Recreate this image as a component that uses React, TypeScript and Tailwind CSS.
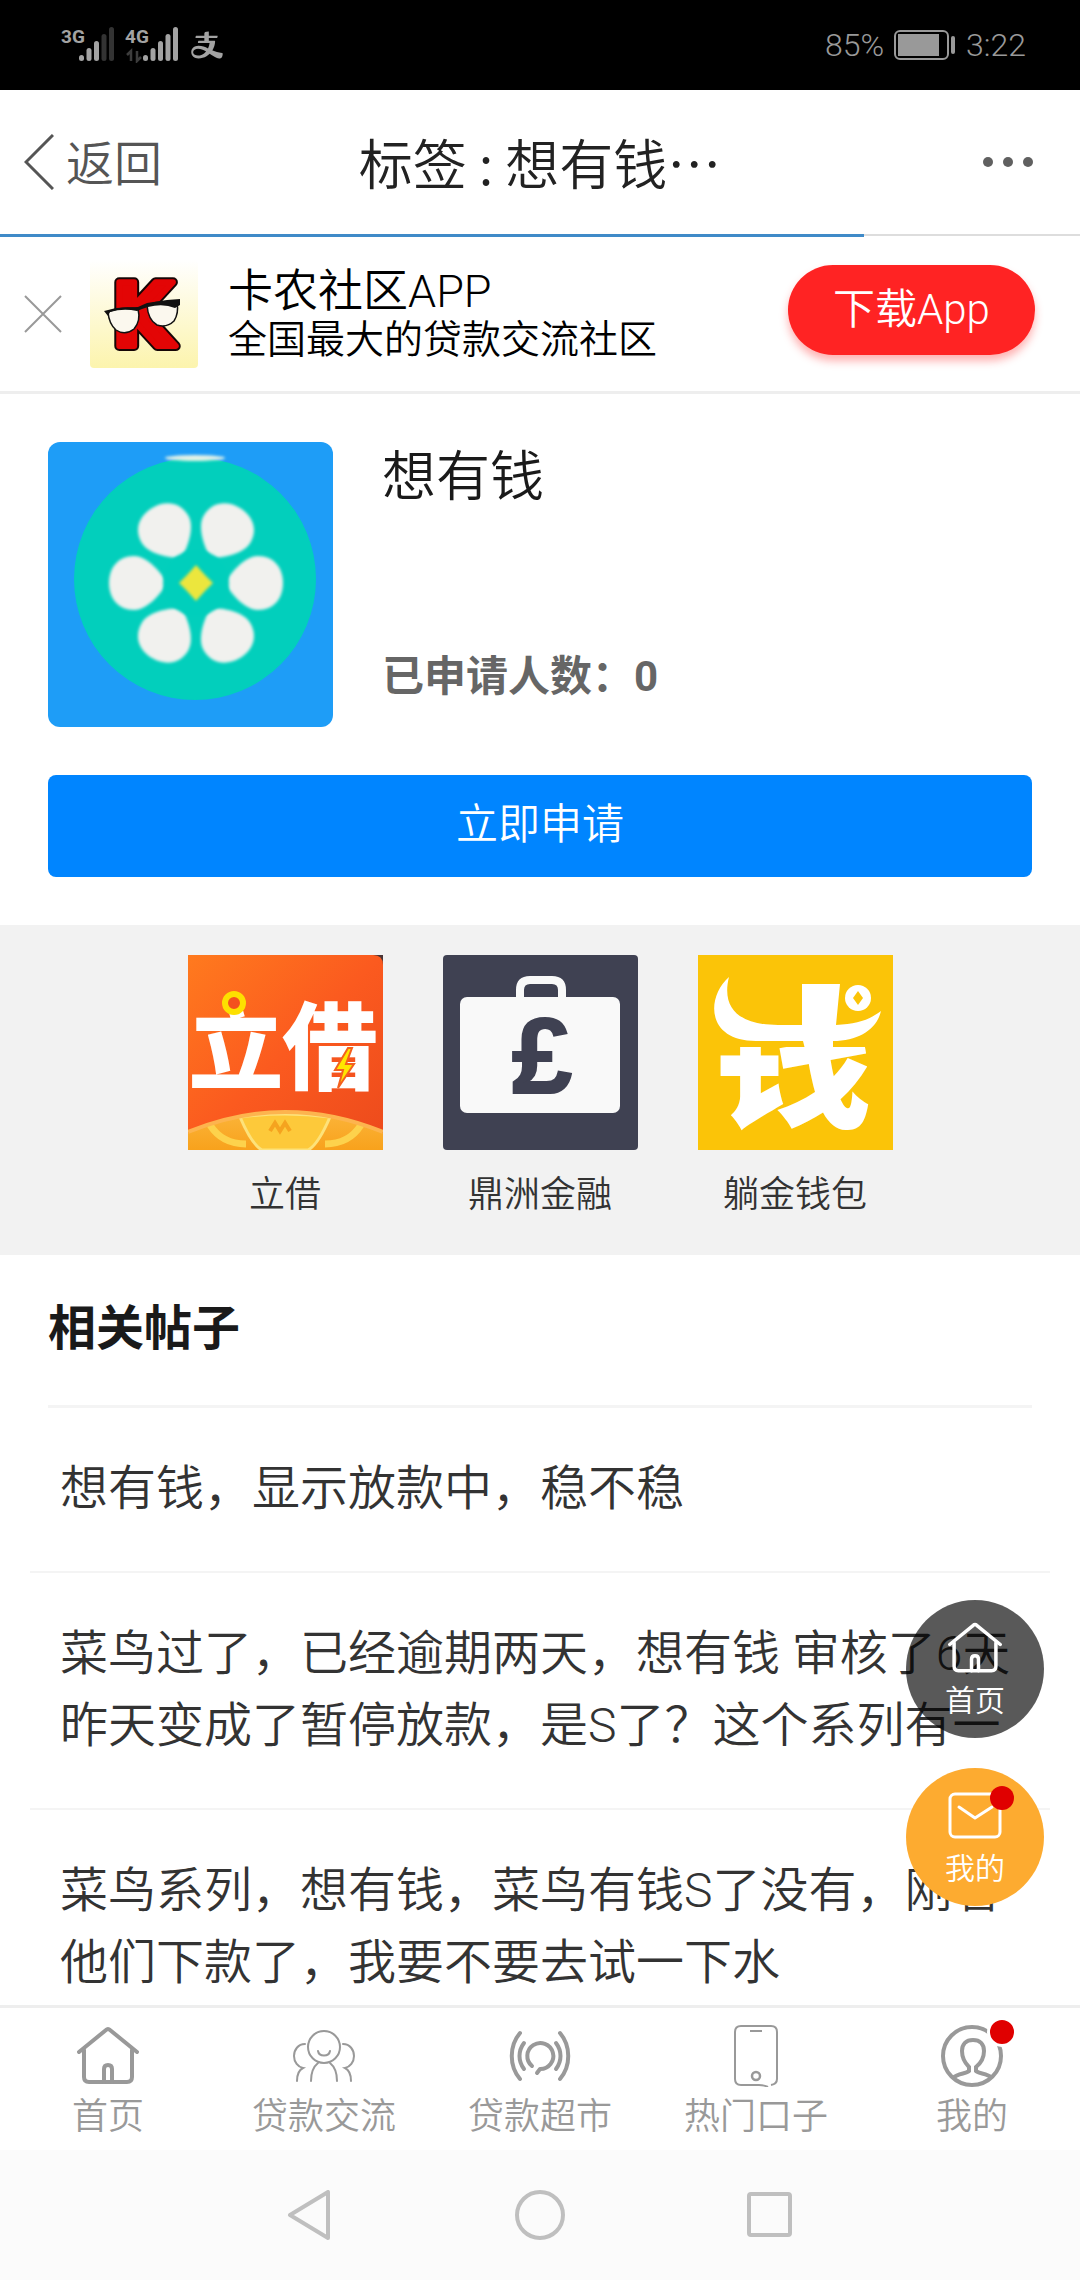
import React from 'react';
import { AiOutlineAlipay } from 'react-icons/ai';

const posts = [
    '想有钱，显示放款中，稳不稳',
    '菜鸟过了，已经逾期两天，想有钱 审核了6天昨天变成了暂停放款，是S了？这个系列有一',
    '菜鸟系列，想有钱，菜鸟有钱S了没有，刚看他们下款了，我要不要去试一下水',
];

interface IconProps {
    className?: string;
}

interface SignalProps {
    label: string;
    active: number;
    data?: boolean;
}

const SignalIcon = ({ label, active, data }: SignalProps) => (
    <svg className="h-9 w-[54px]" viewBox="0 0 54 36">
        <text x="0" y="16" fontFamily="'Liberation Sans Narrow', Roboto, sans-serif" fontSize="19" fontWeight="700" fill="#a3a3a3">{label}</text>
        {data && <path d="M6 34V24l-4 4M12 24v10l4-4" stroke="#3d3d3d" strokeWidth="2.5" fill="none" />}
        {[6, 13, 20, 27, 34].map((h, i) => (
            <rect key={h} x={18 + i * 7.5} y={34 - h} width="5" height={h} rx="2.5" fill={i < active ? '#a3a3a3' : '#333'} />
        ))}
    </svg>
);

const BatteryIcon = () => (
    <svg className="h-[30px] w-[62px]" viewBox="0 0 62 30">
        <rect x="1" y="1" width="53" height="28" rx="5" fill="none" stroke="#999" strokeWidth="2" />
        <rect x="4" y="4" width="41" height="22" fill="#999" />
        <rect x="57" y="6" width="4" height="18" rx="2" fill="#999" />
    </svg>
);

const HomeIcon = ({ className }: IconProps) => (
    <svg className={className} viewBox="0 0 62 62" fill="none" stroke="currentColor" strokeWidth="4" strokeLinecap="round" strokeLinejoin="round">
        <path d="M2 27L29 5q2-2 4 0l27 22" />
        <path d="M7 25v27q0 5 5 5h38q5 0 5-5V25" />
        <path d="M27 57V44q0-4 4-4t4 4v13" />
    </svg>
);

const PeopleIcon = ({ className }: IconProps) => (
    <svg className={className} viewBox="0 0 62 62" fill="none" stroke="currentColor" strokeWidth="2" strokeLinecap="round">
        <circle cx="31" cy="22" r="16" />
        <path d="M25 26c1 6 11 6 12 0" />
        <path d="M25 38c-5 4-7 11-7 18M37 38c5 4 7 11 7 18" />
        <path d="M12 19C5 19 1 25 1 31c0 6 4 11 9 12-4 2-6 7-6 13" />
        <path d="M50 19c7 0 11 6 11 12 0 6-4 11-9 12 4 2 6 7 6 13" />
    </svg>
);

const BroadcastIcon = ({ className }: IconProps) => (
    <svg className={className} viewBox="0 0 62 62" fill="none" stroke="currentColor" strokeWidth="4" strokeLinecap="round">
        <path d="M11 8C0 21 0 41 11 54M51 8c11 13 11 33 0 46" />
        <path d="M15 18c-6 8-6 18 0 26M47 18c6 8 6 18 0 26" />
        <path d="M23 41a13 13 0 1 1 8 3l-3 4" strokeLinejoin="round" />
    </svg>
);

const PhoneIcon = ({ className }: IconProps) => (
    <svg className={className} viewBox="0 0 62 62" fill="none" stroke="currentColor" strokeWidth="2">
        <path d="M43 62q-4-2-9-2H16q-6 0-6-6V7q0-6 6-6h30q6 0 6 6v47q0 5-6 6" />
        <path d="M25 6h12" />
        <circle cx="31" cy="51" r="4" strokeWidth="2.5" />
    </svg>
);

const UserIcon = ({ className }: IconProps) => (
    <svg className={className} viewBox="0 0 62 62" fill="none" stroke="currentColor" strokeWidth="4">
        <circle cx="31" cy="31" r="29" />
        <path d="M12 53c5-5 13-4 16-7v-4c-4-4-7-9-7-16 0-7 4-11 11-11s11 4 11 11c0 7-3 12-8 16v4c3 3 11 2 16 7" />
    </svg>
);

const MailIcon = ({ className }: IconProps) => (
    <svg className={className} viewBox="0 0 54 54" fill="none" stroke="currentColor" strokeWidth="3" strokeLinecap="round" strokeLinejoin="round">
        <rect x="2" y="5" width="50" height="43" rx="5" />
        <path d="M11 18l16 11 17-11" />
    </svg>
);

const AppLogo = () => (
    <svg className="size-[108px] shrink-0" viewBox="0 0 108 108">
        <defs>
            <linearGradient id="logoBg" x1="0" y1="0" x2="0" y2="1">
                <stop offset="0" stopColor="#fff" />
                <stop offset="1" stopColor="#fcf4ad" />
            </linearGradient>
        </defs>
        <rect width="108" height="108" rx="4" fill="url(#logoBg)" />
        <g fontFamily="'DejaVu Sans Condensed', 'DejaVu Sans', sans-serif" fontSize="88" fontWeight="700" strokeLinejoin="round">
            <text x="22" y="86" stroke="#160606" strokeWidth="10">K</text>
            <text x="22" y="86" fill="#e30505" stroke="#e30505" strokeWidth="6">K</text>
        </g>
        <g fill="#fbf8ee" stroke="#111" strokeWidth="1.5">
            <path d="M18 52q14-6 30-3 3 12-4 20-9 7-18 1-7-6-8-18z" />
            <path d="M57 45q14-5 30-2 2 10-3 18-7 7-17 4-9-5-10-20z" />
        </g>
        <path d="M14 51l12-3 22-1 9-4 20-3 13-1v6l-5 3q-12-5-27-1l-6 2-5 2q-14-3-27 1l-2 4z" fill="#111" />
    </svg>
);

const FlowerLogo = () => (
    <svg className="size-[285px] shrink-0 rounded-xl bg-[#1e9df7]" viewBox="0 0 285 285">
        <defs>
            <filter id="soft" x="-20%" y="-50%" width="140%" height="200%">
                <feGaussianBlur stdDeviation="1.5" />
            </filter>
        </defs>
        <circle cx="147" cy="137" r="121" fill="#02cfbc" />
        <ellipse cx="147" cy="16" rx="30" ry="3" fill="#e4f3e6" filter="url(#soft)" />
        <g fill="#f1f1ee" filter="url(#soft)" transform="translate(148 141)">
            {[-150, -90, -30, 30, 90, 150].map((deg) => (
                <path key={deg} transform={`rotate(${deg})`} d="M0-29C-9-34-27-48-27-62-27-78-15-87 0-87S27-78 27-62C27-48 9-34 0-29z" />
            ))}
        </g>
        <circle cx="148" cy="141" r="33" fill="#02cfbc" filter="url(#soft)" />
        <path d="M148 123l9 10 8 8-8 8-9 10-9-10-8-8 8-8z" fill="#ece63c" filter="url(#soft)" />
    </svg>
);

const LijieLogo = () => (
    <svg className="size-[195px]" viewBox="0 0 195 195">
        <defs>
            <linearGradient id="lijieBg" x1="0" y1="0" x2="1" y2="1">
                <stop offset="0" stopColor="#ff7a1e" />
                <stop offset="0.5" stopColor="#fb5a1f" />
                <stop offset="1" stopColor="#ec4a1c" />
            </linearGradient>
            <linearGradient id="gold" x1="0" y1="0" x2="0" y2="1">
                <stop offset="0" stopColor="#fbb53a" />
                <stop offset="1" stopColor="#f8a21c" />
            </linearGradient>
        </defs>
        <rect width="195" height="195" fill="#4a3537" />
        <path d="M0 0h185q10 0 10 10v185H0z" fill="url(#lijieBg)" />
        <text x="1" y="127" fontFamily="'Noto Sans CJK SC', sans-serif" fontSize="94" fontWeight="700" fill="#fff" stroke="#fff" strokeWidth="2">立借</text>
        <circle cx="46" cy="48" r="9" fill="#f4511e" stroke="#fde000" strokeWidth="6" />
        <path d="M160 93l-13 22h8l-5 18 16-24h-8l6-16z" fill="#ffe600" stroke="#f4611e" strokeWidth="2" />
        <path d="M0 178Q97 136 195 178v17H0z" fill="url(#gold)" />
        <path d="M22 170q12 19 36 19M173 170q-12 19-36 19" fill="none" stroke="#fdd24c" strokeWidth="7" />
        <path d="M52 162q12 28 22 33h46q10-5 22-33-45-6-90 0z" fill="#fdc93a" stroke="#fde27a" strokeWidth="3" />
        <path d="M82 176l5-8 5 8 5-8 5 8" fill="none" stroke="#f5a31f" strokeWidth="4" />
        <path d="M0 177Q97 137 195 177" fill="none" stroke="#fdb44e" strokeWidth="4" />
    </svg>
);

const CaseLogo = () => (
    <svg className="size-[195px] rounded-sm" viewBox="0 0 195 195">
        <rect width="195" height="195" fill="#3f4152" />
        <path d="M77 46V35q0-10 10-10h22q10 0 10 10v11" fill="none" stroke="#f9f9f9" strokeWidth="8" />
        <rect x="17" y="42" width="160" height="116" rx="7" fill="#f9f9f9" />
        <text x="99" y="138" textAnchor="middle" fontFamily="'Liberation Sans', sans-serif" fontSize="108" fontWeight="700" fill="#3f4152" stroke="#3f4152" strokeWidth="2">£</text>
    </svg>
);

const PurseLogo = () => (
    <svg className="size-[195px]" viewBox="0 0 195 195">
        <defs>
            <clipPath id="belowHorn">
                <path d="M0 92h195v103H0z" />
            </clipPath>
        </defs>
        <rect width="195" height="195" fill="#fbc408" />
        <text x="14" y="160" fontFamily="'Noto Sans CJK SC', sans-serif" fontSize="160" fontWeight="900" fill="#fff" clipPath="url(#belowHorn)">钱</text>
        <path d="M31 22C8 42 8 86 58 86h47l2 8h28v-8c26 0 44-12 48-30-12 9-24 13-45 14l4-41h-38v41H80C48 70 22 58 31 22z" fill="#fff" />
        <circle cx="160" cy="43" r="13" fill="#fff" />
        <path d="M160 36l5 7-5 7-5-7z" fill="#fbc408" />
    </svg>
);

const apps = [
    { name: '立借', Logo: LijieLogo },
    { name: '鼎洲金融', Logo: CaseLogo },
    { name: '躺金钱包', Logo: PurseLogo },
];

const tabs = [
    { name: '首页', Icon: HomeIcon },
    { name: '贷款交流', Icon: PeopleIcon },
    { name: '贷款超市', Icon: BroadcastIcon },
    { name: '热门口子', Icon: PhoneIcon },
    { name: '我的', Icon: UserIcon, badge: true },
];

function StatusBar() {
    return (
        <div className="flex h-[90px] shrink-0 items-center justify-between bg-black pl-[61px] pr-[54px] text-[#999]">
            <div className="flex items-center gap-[10px]">
                <SignalIcon label="3G" active={3} />
                <SignalIcon label="4G" active={5} data />
                <AiOutlineAlipay className="size-9 text-[#a3a3a3]" />
            </div>
            <div className="flex items-center gap-[10px] text-[32px] leading-9">
                <span>85%</span>
                <BatteryIcon />
                <span>3:22</span>
            </div>
        </div>
    );
}

function NavHeader() {
    return (
        <header className="relative grid h-[146px] shrink-0 grid-cols-[1fr_auto_1fr] items-center border-b-2 border-[#ddd] px-6 font-['Noto_Sans_CJK_SC',sans-serif]">
            <button className="flex items-center gap-3 justify-self-start text-5xl text-[#555]">
                <svg className="h-14 w-[30px]" viewBox="0 0 30 56" fill="none" stroke="currentColor" strokeWidth="3">
                    <path d="M29 1L2 28l27 27" />
                </svg>
                <span className="pb-1">返回</span>
            </button>
            <h1 className="text-[54px] leading-[72px] text-[#222]">标签 : 想有钱…</h1>
            <button aria-label="更多" className="justify-self-end pr-[22px] text-[#606060]">
                <svg className="h-3 w-[52px]" viewBox="0 0 52 12" fill="currentColor">
                    <circle cx="6" cy="6" r="5" />
                    <circle cx="26" cy="6" r="5" />
                    <circle cx="46" cy="6" r="5" />
                </svg>
            </button>
            {/* page load progress */}
            <div className="absolute left-0 top-full -mt-px h-[3px] w-4/5 translate-y-px bg-[#3f8ac8]" />
        </header>
    );
}

function DownloadBanner() {
    return (
        <section className="flex h-[158px] shrink-0 items-center border-b-[3px] border-[#eee] pl-6 pr-[45px]">
            <button aria-label="关闭" className="text-[#999]">
                <svg className="size-[38px]" viewBox="0 0 38 38" stroke="currentColor" strokeWidth="2">
                    <path d="M1 1l36 36M37 1L1 37" />
                </svg>
            </button>
            <div className="ml-7">
                <AppLogo />
            </div>
            <div className="ml-[30px] flex-1 pt-1 text-black">
                <p className="text-[45px] leading-[48px]">卡农社区APP</p>
                <p className="text-[39px] leading-[48px]">全国最大的贷款交流社区</p>
            </div>
            <button className="mb-2 h-[90px] w-[247px] rounded-full bg-[#ff2323] text-[42px] text-white shadow-[0_6px_8px_rgba(255,35,35,0.35)]">
                下载App
            </button>
        </section>
    );
}

function ProductCard() {
    return (
        <section className="p-12">
            <div className="flex gap-[49px]">
                <FlowerLogo />
                <div className="flex flex-col justify-between pb-5">
                    <h2 className="text-[54px] leading-[72px] text-[#1a1a1a]">想有钱</h2>
                    <p className="text-[42px] font-bold leading-[60px] text-[#666]">已申请人数：0</p>
                </div>
            </div>
            <button className="mt-12 h-[102px] w-full rounded-lg bg-[#0085ff] pb-1 text-[42px] text-white">立即申请</button>
        </section>
    );
}

function FloatButtons() {
    return (
        <div className="absolute bottom-[99px] right-9 flex flex-col gap-[30px]">
            <a href="#home" className="flex size-[138px] flex-col items-center rounded-full bg-black/65 pt-[21px] text-white">
                <HomeIcon className="size-[54px]" />
                <span className="mt-2 text-[30px] leading-9">首页</span>
            </a>
            <a href="#mine" className="relative flex size-[138px] flex-col items-center rounded-full bg-[#fdab30] pt-[21px] text-white">
                <MailIcon className="size-[54px]" />
                <span className="mt-2 text-[30px] leading-9">我的</span>
                <i className="absolute right-[30px] top-[18px] size-6 rounded-full bg-[#e00000]" />
            </a>
        </div>
    );
}

function TabBar() {
    return (
        <nav className="grid shrink-0 grid-cols-5 border-t-[3px] border-[#eee] bg-white pt-[17px] pb-[11px] text-[#999]">
            {tabs.map(({ name, Icon, badge }) => (
                <a key={name} href={`#${name}`} className="flex flex-col items-center gap-2">
                    <span className="relative">
                        <Icon className="size-[62px]" />
                        {badge && <i className="absolute -right-3.5 -top-2 size-[30px] rounded-full border-[3px] border-white bg-[#e00000]" />}
                    </span>
                    <span className="text-4xl leading-[44px]">{name}</span>
                </a>
            ))}
        </nav>
    );
}

function SystemNav() {
    return (
        <div className="flex h-[130px] shrink-0 items-center justify-center gap-[180px] bg-[#fbfbfb] text-[#bfbfbf]">
            <button aria-label="后退">
                <svg className="size-[50px]" viewBox="0 0 50 50" fill="none" stroke="currentColor" strokeWidth="4" strokeLinejoin="round">
                    <path d="M43 2v46L5 25z" />
                </svg>
            </button>
            <button aria-label="主屏幕">
                <svg className="size-[50px]" viewBox="0 0 50 50" fill="none" stroke="currentColor" strokeWidth="4">
                    <circle cx="25" cy="25" r="23" />
                </svg>
            </button>
            <button aria-label="最近任务">
                <svg className="size-[50px]" viewBox="0 0 50 50" fill="none" stroke="currentColor" strokeWidth="4">
                    <rect x="4" y="4" width="41" height="41" rx="2" />
                </svg>
            </button>
        </div>
    );
}

export default function App() {
    return (
        <div lang="zh-CN" className="flex h-screen flex-col bg-white font-[Roboto,'Noto_Sans_CJK_SC',sans-serif] font-[350]">
            <StatusBar />
            <NavHeader />
            <DownloadBanner />
            <div className="relative min-h-0 flex-1">
                <main className="h-full overflow-hidden">
                    <ProductCard />

                    <section className="flex justify-center gap-[60px] bg-[#f2f2f2] pt-[30px] pb-[33px]">
                        {apps.map(({ name, Logo }) => (
                            <a key={name} href={`#${name}`} className="flex flex-col items-center gap-[18px] text-4xl leading-[54px] text-[#333]">
                                <Logo />
                                {name}
                            </a>
                        ))}
                    </section>

                    <section>
                        <h2 className="mx-12 border-b-[3px] border-[#f4f4f4] pt-[38px] pb-10 text-5xl font-bold leading-[72px] text-[#1a1a1a]">相关帖子</h2>
                        <ul className="px-[30px]">
                            {posts.map((post) => (
                                <li key={post} className="border-b-2 border-[#f4f4f4] px-[30px] pt-[45px] pb-[46px] text-5xl leading-[72px] text-[#333]">
                                    <a href="#post">{post}</a>
                                </li>
                            ))}
                        </ul>
                    </section>
                </main>
                <FloatButtons />
            </div>
            <TabBar />
            <SystemNav />
        </div>
    );
}
